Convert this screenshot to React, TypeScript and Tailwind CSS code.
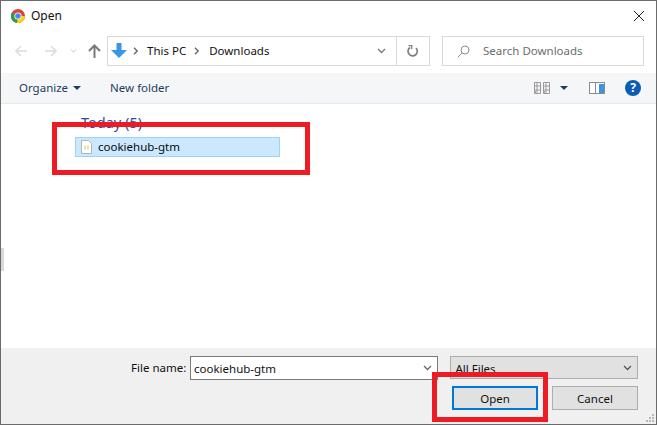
const font = { fontFamily: '"Noto Sans", "Open Sans", sans-serif' };

function Chrome() {
  return (
    <svg width="16" height="16" viewBox="0 0 16 16">
      <circle cx="8" cy="8" r="7" fill="#db4437" />
      <path d="M8 8 L15 8 A7 7 0 0 1 7 15 L4.500 11 Z" fill="#fcd116" />
      <path d="M8 8 L7 15 A7 7 0 0 1 1.900 4.500 Z" fill="#2f9e44" />
      <circle cx="8" cy="8" r="3.6" fill="#fff" />
      <circle cx="8" cy="8" r="2.8" fill="#4a8af4" />
    </svg>
  );
}

function Arrow({ flip, color }: { flip?: boolean; color: string }) {
  return (
    <svg width="14" height="14" viewBox="0 0 14 14" fill="none" stroke={color} strokeWidth="1.6" style={flip ? { transform: 'scaleX(-1)' } : undefined}>
      <path d="M13 7H2M7 2L2 7l5 5" />
    </svg>
  );
}

function Chevron({ color, w = 9 }: { color: string; w?: number }) {
  return (
    <svg width={w} height="6" viewBox="0 0 9 6" fill="none" stroke={color} strokeWidth="1.3">
      <path d="M1 1l3.500 3.500L8 1" />
    </svg>
  );
}

function Sep() {
  return (
    <svg width="6" height="8" viewBox="0 0 6 8" fill="none" stroke="#6d6d6d" strokeWidth="1.500">
      <path d="M1 .8L4.200 4 1 7.200" />
    </svg>
  );
}

function Caret() {
  return <span className="inline-block w-0 h-0 border-l-[4px] border-r-[4px] border-t-[4px] border-l-transparent border-r-transparent border-t-[#1f3a5f]" />;
}

export default function App() {
  return (
    <div style={font} className="relative w-[657px] h-[425px] flex flex-col bg-white border border-[#6b6b6b] overflow-hidden text-[11.5px] leading-[16px] text-[#111]">
      <div className="h-[30px] shrink-0 flex items-center pl-[9px] pr-[11px] gap-[5px]">
        <Chrome />
        <span className="text-[12px]">Open</span>
        <svg className="ml-auto" width="12" height="12" viewBox="0 0 12 12" stroke="#222" strokeWidth="1" fill="none">
          <path d="M1 1l10 10M11 1L1 11" />
        </svg>
      </div>

      <div className="h-[42px] shrink-0 flex items-start pt-[5px] pl-[13px] pr-[11px]">
        <div className="h-[30px] flex items-center">
          <Arrow color="#dcdcdc" />
          <span className="ml-[16px]"><Arrow flip color="#dcdcdc" /></span>
          <span className="ml-[12px] flex"><Chevron w={7} color="#dcdcdc" /></span>
          <svg className="ml-[11px]" width="13" height="14" viewBox="0 0 13 14" fill="none" stroke="#7a7a7a" strokeWidth="2">
            <path d="M6.500 14V2M1 7l5.500-5.500L12 7" />
          </svg>
        </div>
        <div className="ml-[6px] w-[323px] h-[30px] border border-[#d9d9d9] flex items-center">
          <svg className="ml-[3px]" width="16" height="16" viewBox="0 0 16 16">
            <path d="M5.500 0h5v7H16L8 15 0 7h5.500z" fill="#3a96e4" />
          </svg>
          <span className="ml-[6px]"><Sep /></span>
          <span className="ml-[8px]">This PC</span>
          <span className="ml-[8px]"><Sep /></span>
          <span className="ml-[9px]">Downloads</span>
          <span className="ml-auto mr-[10px] flex"><Chevron color="#7a7a7a" /></span>
          <div className="w-[33px] h-full border-l border-[#d9d9d9] flex items-center justify-center">
            <svg width="12" height="13" viewBox="0 0 12 13" fill="none" stroke="#7f7f7f" strokeWidth="1.700">
              <path d="M3 2.500a4.600 4.600 0 1 0 6 .6" />
              <path d="M1.500 .5h3.200v3.400" strokeWidth="1.300" />
            </svg>
          </div>
        </div>
        <div className="ml-[12px] w-[202px] h-[30px] border border-[#d9d9d9] flex items-center pl-[14px] text-[#6d6d6d]">
          <svg width="13" height="13" viewBox="0 0 13 13" fill="none" stroke="#8f8f8f" strokeWidth="1">
            <circle cx="8" cy="5" r="4" />
            <path d="M5 8L.8 12.200" />
          </svg>
          <span className="ml-[13px]">Search Downloads</span>
        </div>
      </div>

      <div className="h-[31px] shrink-0 bg-[#f5f6f7] border-b border-[#e8e9ea] flex items-center pl-[18px] pr-[15px] text-[#1f3a5f]">
        <span>Organize</span>
        <span className="ml-[5px] flex"><Caret /></span>
        <span className="ml-[29px]">New folder</span>
        <svg className="ml-auto" width="16" height="12" viewBox="0 0 16 12" fill="none" stroke="#9a9a9a" strokeWidth="1">
          <path d="M.5.5h6v11h-6zM.5 4h6M.5 8h6M3 .5v11M9.500.5h6v11h-6zM9.500 4h6M9.500 8h6M12 .5v11" />
          <path d="M1 10h1M10 10h1" stroke="#c0392b" />
        </svg>
        <span className="ml-[10px] flex"><Caret /></span>
        <svg className="ml-[21px]" width="16" height="12" viewBox="0 0 16 12">
          <rect x=".5" y=".5" width="15" height="11" fill="#fff" stroke="#8a8a8a" />
          <rect x="6" y="1" width="1" height="10" fill="#8a8a8a" />
          <rect x="10" y="2" width="5" height="9" fill="#3b93e2" />
        </svg>
        <span className="ml-[20px] w-[16px] h-[16px] rounded-full bg-[#0a5cb5] text-white text-[12px] font-bold flex items-center justify-center">?</span>
      </div>

      <div className="flex-1 relative pl-[74px] pt-[8px]">
        <div className="pl-[6px] text-[14.500px] leading-[20px] text-[#1e4fa3]">Today (5)</div>
        <div className="mt-[5px] w-[205px] h-[20px] bg-[#cce8ff] border border-[#99d1ff] flex items-center pl-[5px] gap-[6px] text-[#0a0a0a]">
          <svg width="11" height="14" viewBox="0 0 11 14">
            <path d="M.5.5h7l3 3v10H.5z" fill="#fff" stroke="#b5b5b5" />
            <path d="M4 5.500v4M7 5.500v4" stroke="#d4c64a" strokeWidth="1" />
          </svg>
          <span>cookiehub-gtm</span>
        </div>
        <div className="absolute left-0 top-[144px] w-[3px] h-[23px] bg-[#d9d9d9]" />
      </div>

      <div className="h-[76px] shrink-0 bg-[#f0f0f0] pt-[8px] pl-[130px] pr-[18px]">
        <div className="flex items-start">
          <span className="w-[59px] h-[24px] leading-[24px] shrink-0">File name:</span>
          <div className="w-[249px] h-[24px] bg-white border border-[#7a7a7a] flex items-center pl-[3px] pr-[5px]">
            <span className="pt-[2px]">cookiehub-gtm</span>
            <span className="ml-auto flex"><Chevron color="#666" /></span>
          </div>
          <div className="ml-[12px] w-[188px] h-[23px] bg-[#e1e1e1] border border-[#adadad] flex items-center pl-[4px] pr-[5px]">
            <span className="pt-[2px]">All Files</span>
            <span className="ml-auto flex"><Chevron color="#555" /></span>
          </div>
        </div>
        <div className="mt-[6px] flex justify-end gap-[14px]">
          <div className="w-[86px] h-[24px] bg-[#e1e1e1] border-2 border-[#0078d7] flex items-center justify-center pt-[1px]">Open</div>
          <div className="w-[86px] h-[24px] bg-[#e1e1e1] border border-[#adadad] flex items-center justify-center pt-[1px]">Cancel</div>
        </div>
        <svg className="absolute right-[1px] bottom-[1px]" width="10" height="10" viewBox="0 0 10 10" fill="#b8b8b8">
          <rect x="7" y="1" width="2" height="2" />
          <rect x="4" y="4" width="2" height="2" />
          <rect x="7" y="4" width="2" height="2" />
          <rect x="1" y="7" width="2" height="2" />
          <rect x="4" y="7" width="2" height="2" />
          <rect x="7" y="7" width="2" height="2" />
        </svg>
      </div>

      <div className="absolute left-[51px] top-[121px] w-[258px] h-[53px] border-[5px] border-[#ed1c24]" />
      <div className="absolute left-[431px] top-[371px] w-[116px] h-[50px] border-[5px] border-[#ed1c24]" />
    </div>
  );
}
